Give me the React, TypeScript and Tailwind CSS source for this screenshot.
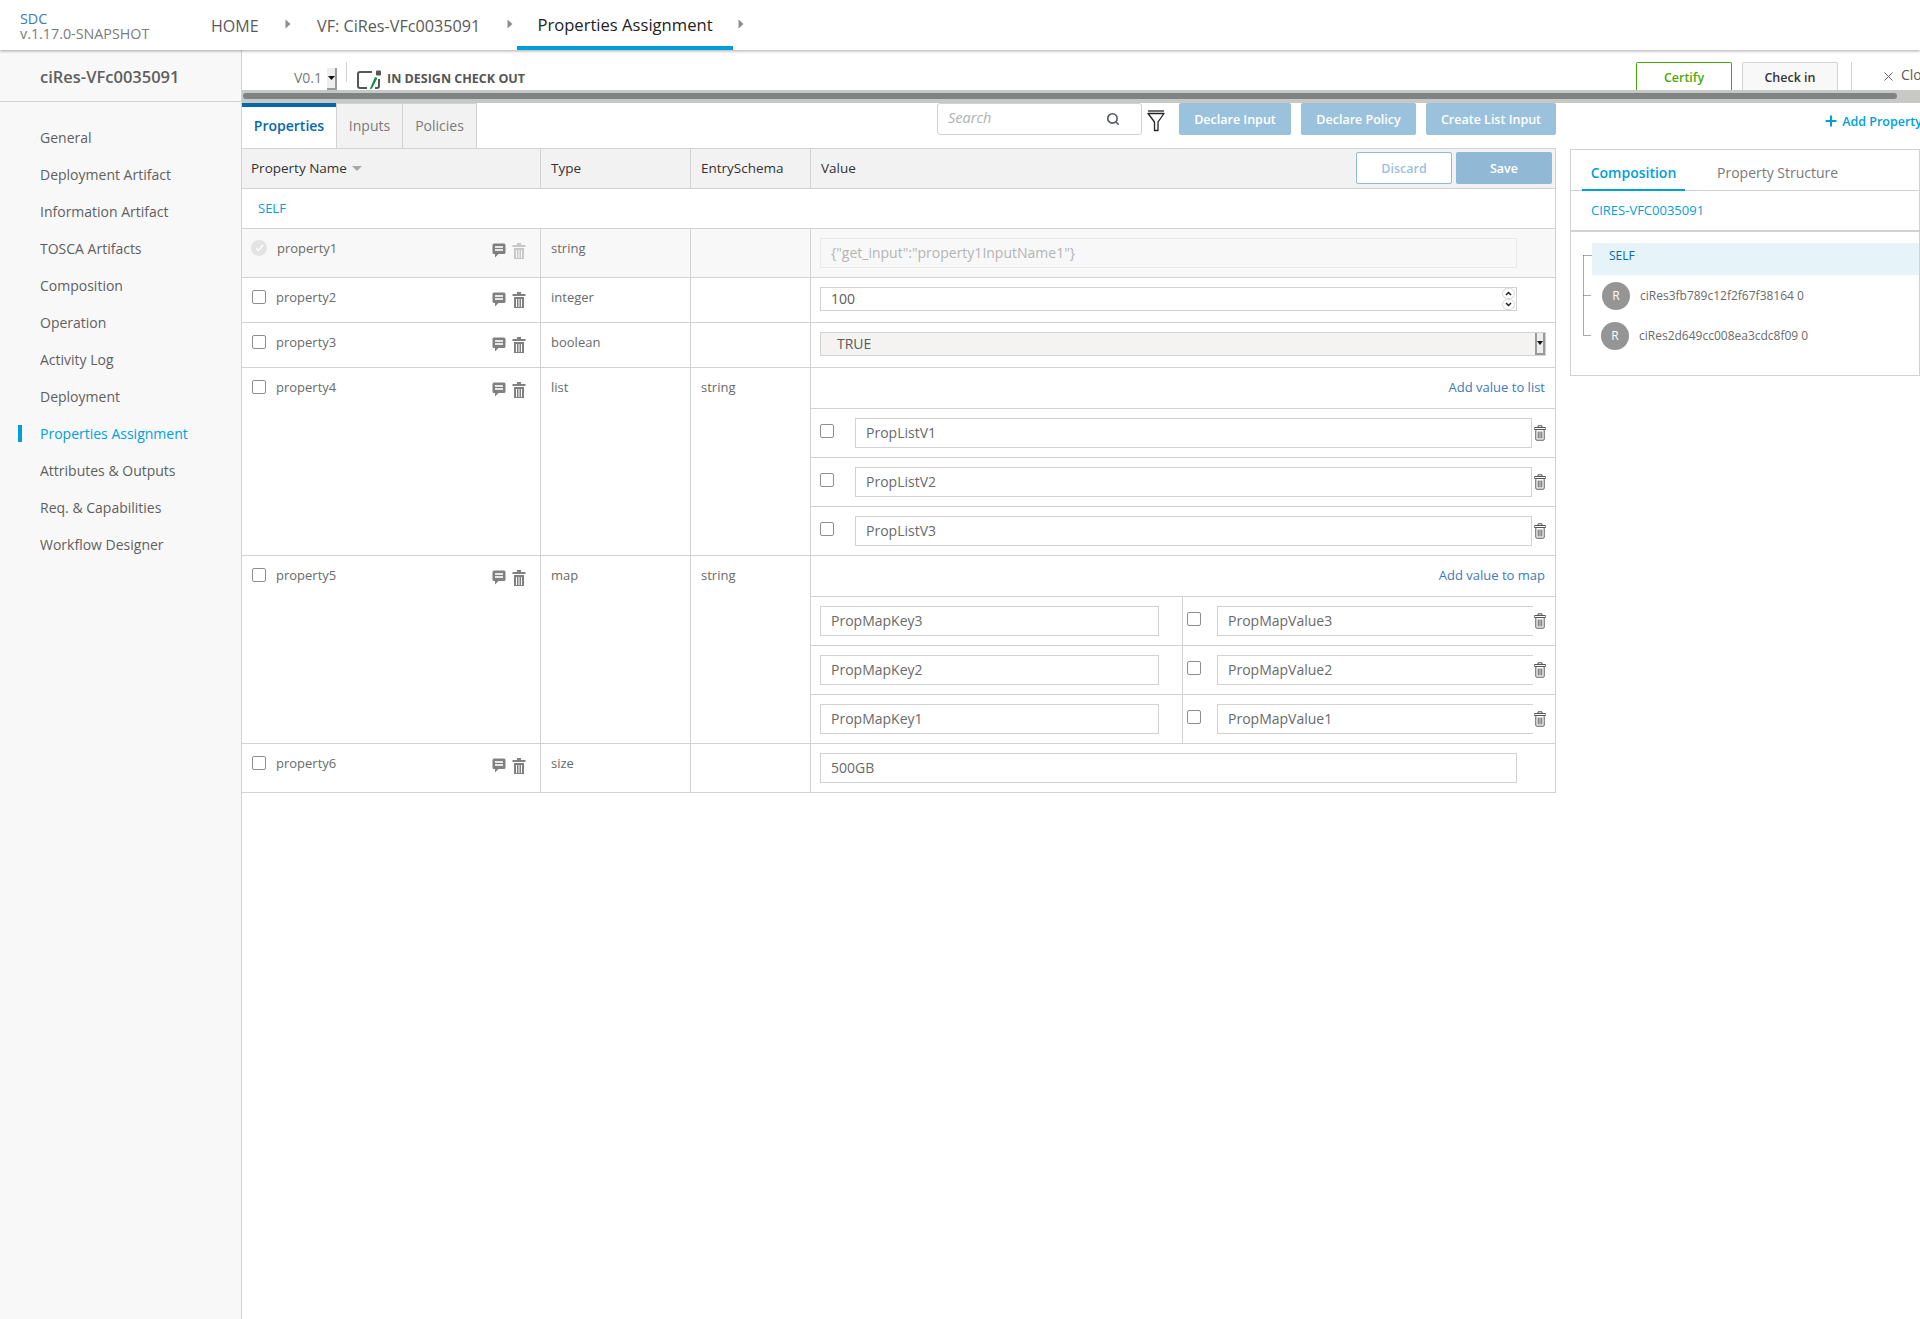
import React from "react";
import { Search, X, Plus } from "lucide-react";

const Comment = () => (
  <svg width="14" height="15" viewBox="0 0 14 15" className="shrink-0">
    <path d="M2 0.500h10a1.500 1.500 0 0 1 1.500 1.500v7.500A1.500 1.500 0 0 1 12 11H6.500L3 14.500V11H2A1.500 1.500 0 0 1 .5 9.500V2A1.500 1.500 0 0 1 2 .5z" fill="#808080" />
    <rect x="3" y="3.200" width="8" height="1.600" fill="#fff" />
    <rect x="3" y="6.200" width="8" height="1.600" fill="#fff" />
  </svg>
);

const TrashSolid = ({ color = "#808080" }: { color?: string }) => (
  <svg width="14" height="16" viewBox="0 0 14 16" className="shrink-0">
    <rect x="5" y="0" width="4" height="2" fill={color} />
    <rect x="0.500" y="2" width="13" height="2" fill={color} />
    <path d="M2 5h10V16H2z" fill={color} />
    <rect x="4" y="7" width="1" height="8" fill="#fff" />
    <rect x="6.500" y="7" width="1" height="8" fill="#fff" />
    <rect x="9" y="7" width="1" height="8" fill="#fff" />
  </svg>
);

const TrashLine = () => (
  <svg width="12" height="16" viewBox="0 0 12 16" className="shrink-0" fill="none" stroke="#555" strokeWidth="1">
    <path d="M4 2.500V.8h4v1.700" />
    <rect x="0.800" y="2.500" width="10.400" height="2" />
    <rect x="1.800" y="4.500" width="8.400" height="10.700" rx="1" />
    <path d="M4.200 6.500v7M6 6.500v7M7.800 6.500v7" />
  </svg>
);

const Arrow = () => (
  <svg width="6" height="10" viewBox="0 0 6 10" className="shrink-0 -mt-[2px]">
    <path d="M0.500 0.500L5.500 5L0.500 9.500z" fill="#8d8d8d" />
  </svg>
);

const Box = ({ className = "" }: { className?: string }) => (
  <span className={"block w-[14px] h-[14px] shrink-0 rounded-[2px] border border-[#8e8e8e] bg-white " + className} />
);

const Field = ({ w, children, className = "" }: { w: string; children?: React.ReactNode; className?: string }) => (
  <div className={"flex items-center h-[30px] border border-[#d2d2d2] pl-[10px] pb-[2px] text-[14px] text-[#6a6a6a] bg-white " + w + " " + className}>
    {children}
  </div>
);

const NameCell = ({ name, disabled }: { name: string; disabled?: boolean }) => (
  <div className={"w-[299px] shrink-0 border-r border-[#d2d2d2] flex items-start pt-[10px] pr-[14px] " + (disabled ? "pl-[9px]" : "pl-[10px]")}>
    {disabled ? (
      <span className="flex items-center justify-center w-[16px] h-[16px] rounded-full bg-[#e3e3e3] shrink-0 mt-[1px]">
        <svg width="9" height="8" viewBox="0 0 9 8" fill="none" stroke="#fff" strokeWidth="1.300"><path d="M1 4.200L3.300 6.500L8 1" /></svg>
      </span>
    ) : (
      <Box className="mt-[2px]" />
    )}
    <span className="ml-[10px] text-[13px] leading-[18px] text-[#6a6a6a]">{name}</span>
    <span className="ml-auto flex items-start gap-[6px] mt-[4px]">
      <Comment />
      {disabled ? (
        <span className="opacity-40"><TrashSolid /></span>
      ) : (
        <span><TrashSolid /></span>
      )}
    </span>
  </div>
);

const TextCell = ({ w, children }: { w: string; children?: React.ReactNode }) => (
  <div className={"shrink-0 border-r border-[#d2d2d2] pl-[10px] pt-[10px] text-[13px] leading-[18px] text-[#6a6a6a] " + w}>{children}</div>
);

const Row = ({ name, type, entry, disabled, children, h }: { name: string; type: string; entry?: string; disabled?: boolean; children: React.ReactNode; h: string }) => (
  <div className={"flex border-b border-[#d2d2d2] " + h + (disabled ? " bg-[#f8f8f8]" : "")}>
    <NameCell name={name} disabled={disabled} />
    <TextCell w="w-[150px]">{type}</TextCell>
    <TextCell w="w-[120px]">{entry}</TextCell>
    <div className="flex-1 min-w-0">{children}</div>
  </div>
);

const ListItem = ({ v }: { v: string }) => (
  <div className="h-[49px] border-t border-[#d2d2d2] flex items-start pt-[9px] pl-[9px]">
    <Box className="mt-[6px]" />
    <Field w="w-[677px]" className="ml-[21px] shrink-0">{v}</Field>
    <span className="ml-[2px] mt-[7px]"><TrashLine /></span>
  </div>
);

const MapItem = ({ k, v }: { k: string; v: string }) => (
  <div className="h-[49px] border-t border-[#d2d2d2] flex">
    <div className="w-[372px] border-r border-[#d2d2d2] pl-[9px] pt-[9px]">
      <Field w="w-[339px]">{k}</Field>
    </div>
    <div className="flex items-start pt-[9px] pl-[4px]">
      <Box className="mt-[6px]" />
      <Field w="w-[316px]" className="ml-[16px] border-r-0">{v}</Field>
      <span className="mt-[7px] ml-[1px]"><TrashLine /></span>
    </div>
  </div>
);

const nav = ["General", "Deployment Artifact", "Information Artifact", "TOSCA Artifacts", "Composition", "Operation", "Activity Log", "Deployment", "Properties Assignment", "Attributes & Outputs", "Req. & Capabilities", "Workflow Designer"];

export default function App() {
  return (
    <div className="w-[1920px] h-[1319px] overflow-hidden bg-white flex flex-col text-[#5a5a5a]" style={{ fontFamily: '"Open Sans", sans-serif' }}>
      <header className="h-[50px] shrink-0 flex items-center bg-white shadow-[0_1px_3px_rgba(0,0,0,0.35)] relative z-10 pl-[20px]">
        <div className="w-[191px] leading-[15px] text-[14.300px] pt-[1px]">
          <div className="text-[#3c7ab8]">SDC</div>
          <div className="text-[#7c7c7c]">v.1.17.0-SNAPSHOT</div>
        </div>
        <div className="w-[74px] text-[16px] text-[#5a5a5a] pt-[2px]">HOME</div>
        <Arrow />
        <div className="ml-[26px] w-[190px] text-[16.200px] text-[#5a5a5a] pt-[2px] whitespace-nowrap">VF: CiRes-VFc0035091</div>
        <Arrow />
        <div className="ml-[4px] h-[50px] w-[216px] border-b-[4px] border-[#009fdb] flex items-center justify-center text-[16.600px] font-medium text-[#222] pt-[5px]">Properties Assignment</div>
        <span className="ml-[5px]"><Arrow /></span>
      </header>

      <div className="flex flex-1 min-h-0">
        <aside className="w-[242px] shrink-0 bg-[#f8f8f8] border-r border-[#d2d2d2]">
          <div className="h-[52px] border-b border-[#d2d2d2] flex items-center pl-[40px] pt-[3px] text-[16.500px] font-semibold text-[#5f5f5f]">ciRes-VFc0035091</div>
          <nav className="pt-[17px]">
            {nav.map((n) => {
              const active = n === "Properties Assignment";
              return (
                <div key={n} className="h-[37px] flex items-center text-[14px] relative pl-[40px]">
                  {active && <span className="absolute left-[18px] top-[10px] w-[4px] h-[17px] bg-[#009fdb]" />}
                  <span className={active ? "text-[#009fdb]" : "text-[#5f5f5f]"}>{n}</span>
                </div>
              );
            })}
          </nav>
        </aside>

        <main className="flex-1 min-w-0 flex flex-col overflow-hidden">
          <div className="h-[40px] shrink-0 flex items-start relative">
            <div className="ml-[52px] mt-[19px] text-[14px] leading-[18px] text-[#7a7a7a]">V0.1</div>
            <div className="ml-[5px] mt-[18px] w-[10px] h-[22px] bg-[#eeeeee] border-r-2 border-b-2 border-[#9a9a9a] flex items-center justify-center">
              <svg width="7" height="4" viewBox="0 0 7 4"><path d="M0 0h7L3.500 4z" fill="#111" /></svg>
            </div>
            <div className="ml-[9px] mt-[12px] w-px h-[20px] bg-[#d2d2d2]" />
            <svg width="26" height="20" viewBox="0 0 26 20" className="ml-[10px] mt-[20px]">
              <path d="M15 2H3a2 2 0 0 0-2 2v12a2 2 0 0 0 2 2h7" fill="none" stroke="#555" strokeWidth="2" />
              <path d="M22 9v7a2 2 0 0 1-2 2h-2" fill="none" stroke="#555" strokeWidth="2" />
              <rect x="19" y="0.500" width="5" height="5" rx="1" fill="#555" />
              <path d="M18 7L12.500 19.500L15 18.500L20.500 8z" fill="#1a8a4c" />
            </svg>
            <div className="ml-[4px] mt-[20px] text-[12.500px] leading-[18px] font-bold text-[#555]">IN DESIGN CHECK OUT</div>
            <div className="ml-auto flex items-start shrink-0">
              <div className="mt-[12px] w-[96px] h-[28px] border border-b-0 border-[#4ca90c] rounded-t-[2px] flex items-center justify-center pt-[4px] text-[12.500px] font-semibold text-[#4ca90c]">Certify</div>
              <div className="ml-[10px] mt-[12px] w-[96px] h-[28px] border border-b-0 border-[#d2d2d2] rounded-t-[2px] bg-[#f8f8f8] flex items-center justify-center pt-[4px] text-[12.500px] font-semibold text-[#333]">Check in</div>
              <div className="ml-[13px] mt-[12px] w-px h-[28px] bg-[#d2d2d2]" />
              <div className="w-[68px] pl-[29px] mt-[19px] flex items-center gap-[5px] text-[14px] leading-[18px] text-[#5a5a5a] overflow-hidden">
                <X size={15} strokeWidth={1.5} className="shrink-0" />
                <span className="-mt-[3px]">Clo</span>
              </div>
            </div>
          </div>

          <div className="h-[13px] shrink-0 bg-[#c8c8c6] pt-[3px] pl-[1px] pr-[23px]">
            <div className="h-[6px] rounded-full bg-[#7f8384]" />
          </div>

          <div className="flex flex-1 min-h-0">
            <div className="w-[1314px] shrink-0 flex flex-col">
              <div className="h-[45px] flex items-start">
                <div className="w-[94px] h-[45px] border-t-[4px] border-[#0568ae] flex items-center justify-center text-[14px] font-semibold text-[#0568ae] pb-[4px]">Properties</div>
                <div className="w-[67px] h-[45px] bg-[#f2f2f2] border border-b-0 border-[#d2d2d2] flex items-center justify-center text-[14px] text-[#7a7a7a] pb-[2px]">Inputs</div>
                <div className="w-[74px] h-[45px] bg-[#f2f2f2] border border-l-0 border-b-0 border-[#d2d2d2] flex items-center justify-center text-[14px] text-[#7a7a7a] pb-[2px]">Policies</div>
                <div className="ml-auto flex items-start">
                  <div className="w-[205px] h-[32px] rounded-[3px] border border-[#d2d2d2] bg-white flex items-center pl-[10px] pr-[21px] justify-between">
                    <span className="text-[14.500px] italic text-[#b0b0b0] pb-[2px]">Search</span>
                    <Search size={14} strokeWidth={2.8} className="text-[#4c5a66]" />
                  </div>
                  <svg width="18" height="22" viewBox="0 0 18 22" className="ml-[5px] mt-[7px]" fill="none" stroke="#222" strokeWidth="1.300">
                    <path d="M1 1h16" />
                    <path d="M1 3.500h16L11 12V20.500H7.500V12z" strokeLinejoin="round" />
                  </svg>
                  <div className="ml-[14px] w-[112px] h-[32px] rounded-[2px] bg-[#9bc2dd] flex items-center justify-center pt-[2px] text-[12.500px] font-semibold text-white">Declare Input</div>
                  <div className="ml-[10px] w-[115px] h-[32px] rounded-[2px] bg-[#9bc2dd] flex items-center justify-center pt-[2px] text-[12.500px] font-semibold text-white">Declare Policy</div>
                  <div className="ml-[10px] w-[130px] h-[32px] rounded-[2px] bg-[#9bc2dd] flex items-center justify-center pt-[2px] text-[12.500px] font-semibold text-white">Create List Input</div>
                </div>
              </div>

              <div className="border-t border-[#d2d2d2] border-r">
                <div className="flex h-[40px] bg-[#f2f2f2] border-b border-[#d2d2d2] text-[13.500px] font-medium text-[#333]">
                  <div className="w-[299px] shrink-0 border-r border-[#d2d2d2] flex items-center pl-[9px] pb-[1px]">
                    Property Name
                    <svg width="10" height="6" viewBox="0 0 10 6" className="ml-[5px] mt-[1px]"><path d="M0 0h10L5 5z" fill="#a8a8a8" /></svg>
                  </div>
                  <div className="w-[150px] shrink-0 border-r border-[#d2d2d2] flex items-center pl-[10px] pb-[1px]">Type</div>
                  <div className="w-[120px] shrink-0 border-r border-[#d2d2d2] flex items-center pl-[10px] pb-[1px]">EntrySchema</div>
                  <div className="flex-1 flex items-center pl-[10px] pr-[3px] pb-[1px]">
                    Value
                    <div className="ml-auto w-[96px] h-[32px] rounded-[2px] border border-[#91b9d5] bg-white flex items-center justify-center pt-[2px] text-[12.500px] font-semibold text-[#9bc2dd]">Discard</div>
                    <div className="ml-[4px] w-[96px] h-[32px] rounded-[2px] bg-[#91b9d5] flex items-center justify-center pt-[2px] text-[12.500px] font-semibold text-white">Save</div>
                  </div>
                </div>

                <div className="h-[40px] border-b border-[#d2d2d2] flex items-center pl-[16px] text-[13px] text-[#009fdb]">SELF</div>

                <Row name="property1" type="string" disabled h="h-[49px]">
                  <div className="pl-[9px] pt-[9px]">
                    <div className="w-[697px] h-[30px] border border-[#e8e8e8] bg-[#f8f8f8] flex items-center pl-[10px] pb-[1px] text-[14px] text-[#b4b4b4]">{'{"get_input":"property1InputName1"}'}</div>
                  </div>
                </Row>

                <Row name="property2" type="integer" h="h-[45px]">
                  <div className="pl-[9px] pt-[9px]">
                    <div className="w-[697px] h-[24px] border border-[#d2d2d2] flex items-center pl-[10px] pr-[1px] text-[14px] text-[#5a5a5a]">
                      <span className="pb-[2px]">100</span>
                      <div className="ml-auto flex flex-col">
                        <span className="w-[13px] h-[11px] rounded-full border border-[#d8d8d8] flex items-center justify-center">
                          <svg width="7" height="5" viewBox="0 0 7 5" fill="none" stroke="#222" strokeWidth="1.500"><path d="M1 4L3.500 1.500L6 4" /></svg>
                        </span>
                        <span className="w-[13px] h-[11px] rounded-full border border-[#d8d8d8] flex items-center justify-center">
                          <svg width="7" height="5" viewBox="0 0 7 5" fill="none" stroke="#222" strokeWidth="1.500"><path d="M1 1L3.500 3.500L6 1" /></svg>
                        </span>
                      </div>
                    </div>
                  </div>
                </Row>

                <Row name="property3" type="boolean" h="h-[45px]">
                  <div className="pl-[9px] pt-[9px]">
                    <div className="w-[726px] h-[24px] border border-[#d2d2d2] bg-[#f4f3f1] flex items-center pl-[16px] text-[14px] text-[#5a5a5a]">
                      <span className="pb-[2px]">TRUE</span>
                      <div className="ml-auto w-[10px] h-[22px] bg-[#eeeeee] border-l-2 border-r-2 border-b-2 border-[#9a9a9a] flex items-center justify-center">
                        <svg width="6" height="4" viewBox="0 0 6 4"><path d="M0 0h6L3 4z" fill="#111" /></svg>
                      </div>
                    </div>
                  </div>
                </Row>

                <Row name="property4" type="list" entry="string" h="h-[188px]">
                  <div className="h-[40px] flex items-center justify-end pr-[10px] text-[13px] text-[#3c7ab8] pb-[1px]">Add value to list</div>
                  <ListItem v="PropListV1" />
                  <ListItem v="PropListV2" />
                  <ListItem v="PropListV3" />
                </Row>

                <Row name="property5" type="map" entry="string" h="h-[188px]">
                  <div className="h-[40px] flex items-center justify-end pr-[10px] text-[13px] text-[#3c7ab8]">Add value to map</div>
                  <MapItem k="PropMapKey3" v="PropMapValue3" />
                  <MapItem k="PropMapKey2" v="PropMapValue2" />
                  <MapItem k="PropMapKey1" v="PropMapValue1" />
                </Row>

                <Row name="property6" type="size" h="h-[49px]">
                  <div className="pl-[9px] pt-[9px]">
                    <Field w="w-[697px]">500GB</Field>
                  </div>
                </Row>
              </div>
            </div>

            <div className="ml-[14px] w-[350px] shrink-0 flex flex-col">
              <div className="h-[46px] flex items-center justify-end -mr-[2px] text-[12.500px] font-semibold text-[#009fdb] whitespace-nowrap pb-[8px]">
                <Plus size={16} strokeWidth={3} className="mr-[3px] shrink-0 -mt-[2px]" />
                Add Property
              </div>
              <div className="h-[227px] border border-[#d2d2d2]">
                <div className="h-[41px] border-b border-[#d2d2d2] flex items-end pl-[11px]">
                  <div className="w-[103px] h-[41px] border-b-2 border-[#009fdb] -mb-px flex items-center justify-center text-[14px] font-semibold text-[#009fdb] pt-[6px]">Composition</div>
                  <div className="ml-[32px] h-[41px] flex items-center text-[14px] text-[#7a7a7a] pt-[6px]">Property Structure</div>
                </div>
                <div className="h-[41px] border-b-2 border-[#d2d2d2] flex items-center pl-[20px] pt-[1px] text-[13px] text-[#009fdb]">CIRES-VFC0035091</div>
                <div className="relative pl-[21px] pt-[11px]">
                  <svg width="10" height="84" viewBox="0 0 10 84" className="absolute left-[12px] top-[21px]" fill="none" stroke="#555" strokeDasharray="1 1">
                    <path d="M0.500 2.500H9M0.500 2.500V82.500H8M0.500 42.500H8" />
                  </svg>
                  <div className="h-[32px] bg-[#e6f4f9] flex items-center pl-[17px] text-[12px] text-[#0568ae] pb-[6px]">SELF</div>
                  <div className="flex items-center h-[40px] mt-[1px] pl-[10px] text-[12px] text-[#6a6a6a]">
                    <span className="w-[28px] h-[28px] rounded-full bg-[#959595] flex items-center justify-center text-white text-[12px] shrink-0">R</span>
                    <span className="ml-[10px]">ciRes3fb789c12f2f67f38164 0</span>
                  </div>
                  <div className="flex items-center h-[40px] pl-[9px] text-[12px] text-[#6a6a6a]">
                    <span className="w-[28px] h-[28px] rounded-full bg-[#959595] flex items-center justify-center text-white text-[12px] shrink-0">R</span>
                    <span className="ml-[10px]">ciRes2d649cc008ea3cdc8f09 0</span>
                  </div>
                </div>
              </div>
            </div>
          </div>
        </main>
      </div>
    </div>
  );
}
